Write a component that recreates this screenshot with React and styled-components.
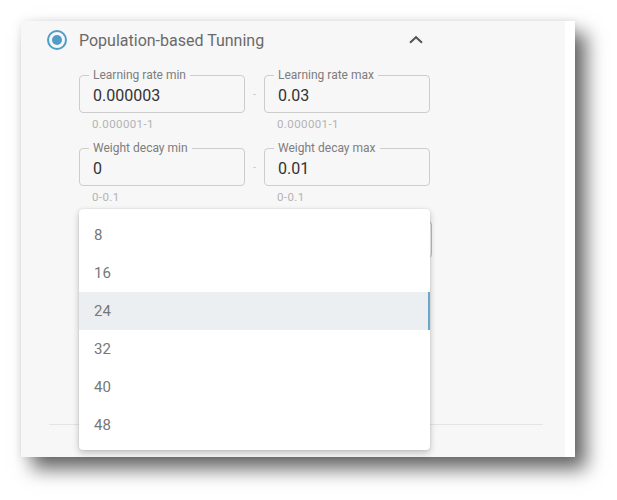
import styled, { createGlobalStyle } from "styled-components";

const GlobalStyle = createGlobalStyle`
    body {
        margin: 0;
        background: #fff;
        font-family: Roboto, "Liberation Sans", sans-serif;
    }
`;

const Page = styled.div`
    padding: 21px 0 43px 21px;
`;

const Panel = styled.div`
    position: relative;
    box-sizing: border-box;
    width: 554px;
    height: 436px;
    background: #f7f7f7;
    border-right: 10px solid #fff;
    box-shadow: 11px 12px 18px rgba(0, 0, 0, 0.6), 0 0 8px rgba(0, 0, 0, 0.08);
    display: flex;
    flex-direction: column;
`;

const Header = styled.div`
    display: flex;
    align-items: center;
    height: 38px;
    width: 379px;
    margin-left: 26px;
`;

const Radio = styled.span`
    box-sizing: border-box;
    width: 20px;
    height: 20px;
    border: 2px solid #4f9dc8;
    border-radius: 50%;
    display: flex;
    align-items: center;
    justify-content: center;
    &::after {
        content: "";
        width: 10px;
        height: 10px;
        border-radius: 50%;
        background: #4f9dc8;
    }
`;

const Title = styled.span`
    flex: 1;
    margin-left: 12px;
    font-size: 16px;
    color: #6a6a6a;
`;

const Chevron = styled.span`
    width: 20px;
    height: 20px;
    display: flex;
`;

const Fields = styled.div`
    margin: 16px 0 0 58px;
    display: flex;
    flex-direction: column;
    gap: 18px;
`;

const Row = styled.div`
    display: flex;
    align-items: flex-start;
`;

const Field = styled.div`
    width: 166px;
    display: flex;
    flex-direction: column;
`;

const Box = styled.div`
    position: relative;
    box-sizing: border-box;
    height: 38px;
    border: 1px solid #cdcdcd;
    border-radius: 4px;
    display: flex;
    align-items: center;
    padding: 2px 13px 0;
    font-size: 16px;
    color: #333;
`;

const Label = styled.span`
    position: absolute;
    left: 9px;
    top: -8px;
    padding: 0 4px;
    background: #f7f7f7;
    font-size: 12px;
    line-height: 14px;
    color: #7d7d7d;
`;

const Helper = styled.span`
    margin-top: 5px;
    padding-left: 13px;
    font-size: 11.5px;
    line-height: 12px;
    letter-spacing: 0.4px;
    color: #b3b3b3;
`;

const Dash = styled.span`
    width: 19px;
    height: 38px;
    display: flex;
    align-items: center;
    justify-content: center;
    font-size: 11px;
    color: #c8c8c8;
`;

const Select = styled.div`
    box-sizing: border-box;
    width: 353px;
    height: 37px;
    margin: 18px 0 0 58px;
    border: 1px solid #bdbdbd;
    border-radius: 4px;
`;

const Divider = styled.div`
    margin: auto 22px 32px 28px;
    height: 1px;
    background: #e4e4e4;
`;

const Menu = styled.ul`
    position: absolute;
    left: 58px;
    top: 188px;
    width: 351px;
    height: 241px;
    box-sizing: border-box;
    margin: 0;
    padding: 7px 0;
    list-style: none;
    background: #fff;
    border-radius: 4px;
    box-shadow: 0 3px 7px rgba(0, 0, 0, 0.22), 0 0 2px rgba(0, 0, 0, 0.12);
`;

const Item = styled.li`
    box-sizing: border-box;
    height: 38px;
    display: flex;
    align-items: center;
    padding-left: 15px;
    font-size: 15px;
    color: #777;
    background: ${(p) => (p.$active ? "#eceff1" : "transparent")};
    border-right: 2px solid ${(p) => (p.$active ? "#6aa6c9" : "transparent")};
`;

const rows = [
    [
        { label: "Learning rate min", value: "0.000003", hint: "0.000001-1" },
        { label: "Learning rate max", value: "0.03", hint: "0.000001-1" },
    ],
    [
        { label: "Weight decay min", value: "0", hint: "0-0.1" },
        { label: "Weight decay max", value: "0.01", hint: "0-0.1" },
    ],
];

const options = [8, 16, 24, 32, 40, 48];

function TextField({ label, value, hint }) {
    return (
        <Field>
            <Box>
                <Label>{label}</Label>
                {value}
            </Box>
            <Helper>{hint}</Helper>
        </Field>
    );
}

export default function App() {
    return (
        <Page>
            <GlobalStyle />
            <Panel>
                <Header>
                    <Radio />
                    <Title>Population-based Tunning</Title>
                    <Chevron>
                        <svg width="20" height="20" viewBox="0 0 20 20">
                            <polyline points="4,12.8 10,7.2 16,12.8" fill="none" stroke="#555" strokeWidth="2" />
                        </svg>
                    </Chevron>
                </Header>
                <Fields>
                    {rows.map((row, i) => (
                        <Row key={i}>
                            <TextField {...row[0]} />
                            <Dash>-</Dash>
                            <TextField {...row[1]} />
                        </Row>
                    ))}
                </Fields>
                <Select />
                <Divider />
                <Menu>
                    {options.map((o) => (
                        <Item key={o} $active={o === 24}>{o}</Item>
                    ))}
                </Menu>
            </Panel>
        </Page>
    );
}
